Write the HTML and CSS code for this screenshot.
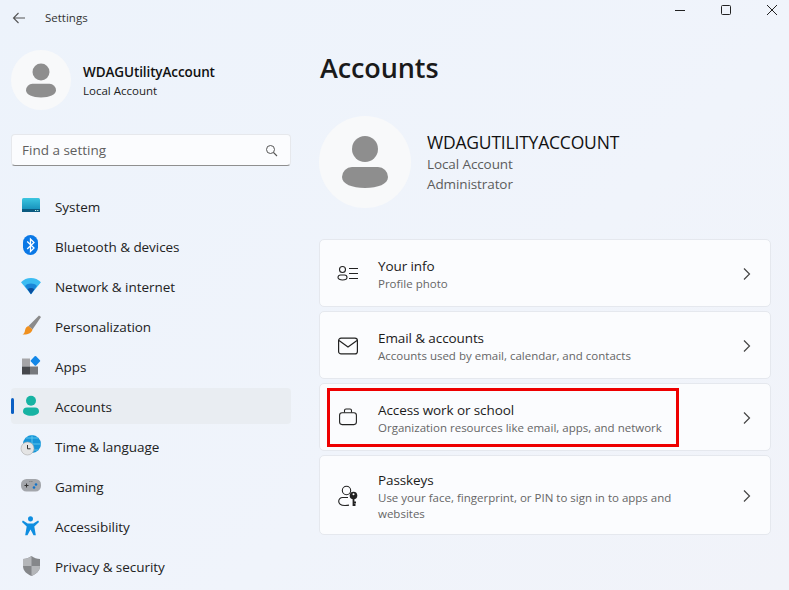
FILE: index.html
```html
<!DOCTYPE html>
<html lang="en">
<head>
  <meta charset="UTF-8" />
  <title>Settings</title>
  <link rel="stylesheet" href="styles.css">
</head>
<body>
  <div class="window">
    <header class="titlebar">
      <svg class="back" width="16" height="16" viewBox="0 0 16 16"><path d="M14 8H2.500M7.500 3 2.500 8l5 5" fill="none" stroke="#555" stroke-width="1.100"/></svg>
      <span class="app-name">Settings</span>
      <div class="controls">
        <svg width="12" height="12" viewBox="0 0 12 12"><path d="M1 6.500h10" stroke="#222" stroke-width="1"/></svg>
        <svg width="12" height="12" viewBox="0 0 12 12"><rect x="1.500" y="1.500" width="9" height="9" rx="1" fill="none" stroke="#222" stroke-width="1"/></svg>
        <svg width="12" height="12" viewBox="0 0 12 12"><path d="M1 1l10 10M11 1 1 11" stroke="#222" stroke-width="1"/></svg>
      </div>
    </header>

    <div class="columns">
      <aside class="sidebar">
        <div class="profile">
          <div class="avatar small">
            <svg width="30" height="35" viewBox="0 0 46 52"><circle cx="23" cy="13" r="13" fill="#8e8e8e"/><path d="M10 31h26a10 10 0 0 1 10 10c0 7-10 11-23 11S0 48 0 41a10 10 0 0 1 10-10z" fill="#8e8e8e"/></svg>
          </div>
          <div>
            <div class="profile-name">WDAGUtilityAccount</div>
            <div class="profile-type">Local Account</div>
          </div>
        </div>

        <div class="search">
          <span>Find a setting</span>
          <svg width="13" height="13" viewBox="0 0 13 13"><circle cx="5.500" cy="5.500" r="4" fill="none" stroke="#555" stroke-width="1"/><path d="M8.500 8.500 12 12" stroke="#555" stroke-width="1.100"/></svg>
        </div>

        <nav class="nav">
          <a class="nav-item">
            <svg class="nav-icon" viewBox="0 0 20 20"><defs><linearGradient id="sys" x1="0" y1="0" x2="0" y2="1"><stop offset="0" stop-color="#3cc6e0"/><stop offset="1" stop-color="#0f86b4"/></linearGradient></defs><rect x="0" y="2" width="18" height="14" rx="1.500" fill="url(#sys)"/><rect x="0" y="13" width="18" height="3" fill="#0b5a80"/><path d="M13 14.500h1.200M15.200 14.500h1.200" stroke="#cfe" stroke-width="1"/></svg>
            System
          </a>
          <a class="nav-item">
            <svg class="nav-icon" viewBox="0 0 20 20"><rect x="1" y="-1" width="15" height="20" rx="7.500" fill="#0a78e6"/><path d="M5.200 5.500 12 12 8.500 15.500V3L12 6.500 5.200 13" fill="none" stroke="#fff" stroke-width="1.300"/></svg>
            Bluetooth &amp; devices
          </a>
          <a class="nav-item">
            <svg class="nav-icon" viewBox="0 0 20 20"><g transform="translate(-1 -1.500) scale(1.050 1.200)"><path d="M0 6.500C2.500 4.300 5.800 3 9.500 3s7 1.300 9.500 3.500L9.500 16.500z" fill="#3bbcf2"/><path d="M3.800 9.500C5.300 8.200 7.300 7.500 9.500 7.500s4.200.7 5.700 2L9.500 16.500z" fill="#1a86d8"/><path d="M6.300 12.300c.9-.7 2-1.100 3.200-1.100s2.300.4 3.200 1.100l-3.200 4.200z" fill="#0b4f9e"/></g></svg>
            Network &amp; internet
          </a>
          <a class="nav-item">
            <svg class="nav-icon" viewBox="0 0 20 20"><path d="M6.500 10 17 -0.500l2 1.500L10.500 13.500z" fill="#8b8b8b"/><path d="M6.500 10 10.500 13.500c-.5 3.500-5 5.500-10 5 1.800-1 2.200-2.500 2.600-4.500.4-2 1.900-3.700 3.400-4z" fill="#f0901e"/></svg>
            Personalization
          </a>
          <a class="nav-item">
            <svg class="nav-icon" viewBox="0 0 20 20"><g transform="translate(-1 0)"><rect x="1" y="2.500" width="8" height="8" fill="#a5a5a8"/><rect x="1" y="10.500" width="8" height="8" fill="#46484c"/><rect x="9" y="10.500" width="8" height="8" fill="#77797d"/><rect x="10.700" y="1.200" width="7.400" height="7.400" rx="1" transform="rotate(45 14.400 4.900)" fill="#1287e8"/></g></svg>
            Apps
          </a>
          <a class="nav-item active">
            <svg class="nav-icon" viewBox="0 0 20 20"><circle cx="9" cy="4.800" r="5" fill="#17b3a3"/><path d="M5 11.500h8a4 4 0 0 1 4 4c0 2.600-3.600 4.200-8 4.200s-8-1.600-8-4.200a4 4 0 0 1 4-4z" fill="#17b3a3"/></svg>
            Accounts
          </a>
          <a class="nav-item">
            <svg class="nav-icon" viewBox="0 0 20 20"><circle cx="10" cy="8" r="9" fill="#1795d8"/><path d="M1 8h18M10-1v18M4 2h12M4 14h12" stroke="#6cd0f2" stroke-width=".8"/><circle cx="5.500" cy="12.500" r="6.500" fill="#e4e4e4" stroke="#aaa" stroke-width=".6"/><path d="M5.500 9V12.800H8.500" fill="none" stroke="#333" stroke-width="1"/></svg>
            Time &amp; language
          </a>
          <a class="nav-item">
            <svg class="nav-icon" viewBox="0 0 20 20"><g transform="translate(-1 0)"><rect x="0" y="3" width="20" height="12.500" rx="5.500" fill="#a3a6ab"/><path d="M3.500 9.500h4M5.500 7.500v4" stroke="#333" stroke-width="1"/><circle cx="13" cy="11.500" r="1.300" fill="#1273c8"/><circle cx="15" cy="8.500" r="1.300" fill="#1273c8"/><path d="M8.500 5.500h.8M10.500 5.500h.8" stroke="#555" stroke-width=".8"/></g></svg>
            Gaming
          </a>
          <a class="nav-item">
            <svg class="nav-icon" viewBox="0 0 20 20"><g transform="translate(-1 0) scale(.95 1)"><circle cx="10" cy="2.800" r="2.600" fill="#0f8ee0"/><path d="M2 4.500 7 7.500h6l5-3 1 1.600L14 10.500l1.600 8.800h-2.400L10 13.500l-3.200 5.800H4.400L6 10.500 1 6.100z" fill="#0f8ee0"/></g></svg>
            Accessibility
          </a>
          <a class="nav-item">
            <svg class="nav-icon" viewBox="0 0 20 20"><path d="M9.500 0C12 2 15 3 18 3v7c0 5-4 8-8.500 10C5 18 1 15 1 10V3c3 0 6-1 8.500-3z" fill="#85878a"/><path d="M9.500 0v10H1V3c3 0 6-1 8.500-3zM9.500 10H18c0 5-4 8-8.500 10z" fill="#b4b6b9"/></svg>
            Privacy &amp; security
          </a>
        </nav>
      </aside>

      <main class="content">
        <h1 class="page-title">Accounts</h1>

        <section class="account">
          <div class="avatar large">
            <svg width="46" height="52" viewBox="0 0 46 52"><circle cx="23" cy="13" r="13" fill="#8e8e8e"/><path d="M10 31h26a10 10 0 0 1 10 10c0 7-10 11-23 11S0 48 0 41a10 10 0 0 1 10-10z" fill="#8e8e8e"/></svg>
          </div>
          <div>
            <div class="account-name">WDAGUTILITYACCOUNT</div>
            <div class="account-line">Local Account</div>
            <div class="account-line">Administrator</div>
          </div>
        </section>

        <section class="cards">
          <div class="card">
            <svg class="card-icon" viewBox="0 0 20 20"><circle cx="4.500" cy="6.500" r="3" fill="none" stroke="#222" stroke-width="1.100"/><path d="M2.500 12h4A2.500 2.500 0 0 1 9 14.500C9 16 7 17 4.500 17S0 16 0 14.500A2.500 2.500 0 0 1 2.500 12z" fill="none" stroke="#222" stroke-width="1.100"/><path d="M11 5.500h9M11 10.500h9M11 15.500h9" stroke="#222" stroke-width="1.100"/></svg>
            <div class="card-text">
              <div class="card-title">Your info</div>
              <div class="card-desc">Profile photo</div>
            </div>
            <svg class="chevron" width="10" height="14" viewBox="0 0 10 14"><path d="M2 1.500 7.500 7 2 12.500" fill="none" stroke="#444" stroke-width="1.200"/></svg>
          </div>

          <div class="card">
            <svg class="card-icon" viewBox="0 0 20 20"><rect x=".6" y="3.100" width="18.800" height="15.800" rx="2.500" fill="none" stroke="#222" stroke-width="1.200"/><path d="M1 5.500 10 12l9-6.500" fill="none" stroke="#222" stroke-width="1.200"/></svg>
            <div class="card-text">
              <div class="card-title">Email &amp; accounts</div>
              <div class="card-desc">Accounts used by email, calendar, and contacts</div>
            </div>
            <svg class="chevron" width="10" height="14" viewBox="0 0 10 14"><path d="M2 1.500 7.500 7 2 12.500" fill="none" stroke="#444" stroke-width="1.200"/></svg>
          </div>

          <div class="card">
            <svg class="card-icon" viewBox="0 0 20 20"><rect x="1.600" y="5.800" width="16.800" height="11.800" rx="2.500" fill="none" stroke="#222" stroke-width="1.100"/><path d="M6.500 5.500V3.500A1.500 1.500 0 0 1 8 2h4a1.500 1.500 0 0 1 1.500 1.500v2" fill="none" stroke="#222" stroke-width="1.100"/></svg>
            <div class="card-text">
              <div class="card-title">Access work or school</div>
              <div class="card-desc">Organization resources like email, apps, and network</div>
            </div>
            <svg class="chevron" width="10" height="14" viewBox="0 0 10 14"><path d="M2 1.500 7.500 7 2 12.500" fill="none" stroke="#444" stroke-width="1.200"/></svg>
            <div class="highlight"></div>
          </div>

          <div class="card tall">
            <svg class="card-icon" viewBox="0 0 20 20"><circle cx="8.500" cy="5.500" r="4.200" fill="none" stroke="#222" stroke-width="1.100"/><path d="M10 12.500H4.500a3.800 3.800 0 0 0-3.800 3.800c0 2.700 2.500 4.200 6.300 4.200 1.300 0 2.700-.1 4-.4" fill="none" stroke="#222" stroke-width="1.100"/><circle cx="15.500" cy="10.500" r="3.800" fill="#222"/><circle cx="15.500" cy="9.200" r="1" fill="#fff"/><path d="M15.500 13v8M15.500 17.500h2.500M15.500 20h2" stroke="#222" stroke-width="1.800"/></svg>
            <div class="card-text">
              <div class="card-title">Passkeys</div>
              <div class="card-desc">Use your face, fingerprint, or PIN to sign in to apps and websites</div>
            </div>
            <svg class="chevron" width="10" height="14" viewBox="0 0 10 14"><path d="M2 1.500 7.500 7 2 12.500" fill="none" stroke="#444" stroke-width="1.200"/></svg>
          </div>
        </section>
      </main>
    </div>
  </div>
</body>
</html>
```

FILE: styles.css
```css
* {
  box-sizing: border-box;
}

html, body {
  margin: 0;
  height: 100%;
}

body {
  font-family: 'Open Sans', 'Noto Sans', sans-serif;
  color: #1b1b1b;
  background-color: #eff4fb;
}

.window {
  height: 590px;
  overflow: hidden;
  background: linear-gradient(135deg, #edf3fb 0%, #f0f4fb 60%, #f1f3f9 100%);
}

/* title bar */
.titlebar {
  display: flex;
  align-items: center;
  height: 36px;
  padding-left: 11px;
}

.back {
  margin-right: 18px;
}

.app-name {
  font-size: 11.500px;
  color: #333;
  margin-top: -2px;
}

.controls {
  display: flex;
  gap: 34px;
  margin-left: auto;
  margin-right: 11px;
  margin-top: -16px;
}

.columns {
  display: flex;
}

/* sidebar */
.sidebar {
  width: 319px;
  padding: 14px 28px 0 11px;
  flex-shrink: 0;
}

.profile {
  display: flex;
  align-items: center;
  gap: 12px;
  height: 60px;
}

.avatar {
  display: flex;
  align-items: center;
  justify-content: center;
  border-radius: 50%;
  background-color: #f8f9fa;
  flex-shrink: 0;
}

.avatar.small {
  width: 60px;
  height: 60px;
}

.avatar.large {
  width: 92px;
  height: 92px;
}

.profile-name {
  font-size: 13.500px;
  font-weight: 600;
  line-height: 19px;
  color: #111;
  letter-spacing: -0.1px;
  margin-top: 2px;
}

.profile-type {
  font-size: 11.500px;
  line-height: 17px;
  color: #222;
}

.search {
  display: flex;
  align-items: center;
  justify-content: space-between;
  width: 280px;
  height: 32px;
  margin: 24px 0 22px;
  padding: 0 12px 0 10px;
  font-size: 13.500px;
  color: #5f5f5f;
  background-color: #fbfcfe;
  border: 1px solid #e6e8ec;
  border-bottom-color: #8f8f8f;
  border-radius: 4px;
}

.nav {
  display: flex;
  flex-direction: column;
  gap: 4px;
}

.nav-item {
  position: relative;
  display: flex;
  align-items: center;
  gap: 13px;
  height: 36px;
  padding: 2px 0 0 11px;
  font-size: 13.500px;
  color: #222;
  border-radius: 4px;
  letter-spacing: -0.05px;
}

.nav-item.active {
  background-color: #e9edf2;
}

.nav-item.active::before {
  content: "";
  position: absolute;
  left: 0;
  top: 10px;
  width: 3px;
  height: 16px;
  border-radius: 2px;
  background-color: #0a5fc4;
}

.nav-icon {
  width: 20px;
  height: 20px;
  margin-top: -2px;
  flex-shrink: 0;
  overflow: visible;
}

/* main column */
.content {
  flex: 1;
  padding: 10px 18px 0 0;
}

.page-title {
  margin: 0 0 26px 1px;
  font-size: 27px;
  font-weight: 600;
  line-height: 44px;
  color: #1a1a1a;
  letter-spacing: -0.1px;
}

.account {
  display: flex;
  align-items: center;
  gap: 16px;
  margin-bottom: 31px;
}

.account-name {
  font-size: 17.500px;
  line-height: 23px;
  color: #111;
  letter-spacing: -0.2px;
}

.account-line {
  font-size: 13.500px;
  line-height: 20px;
  color: #5c5c5c;
  letter-spacing: -0.1px;
}

.cards {
  display: flex;
  flex-direction: column;
  gap: 4px;
}

.card {
  position: relative;
  display: flex;
  align-items: center;
  height: 68px;
  padding: 0 18px 0 18px;
  background-color: #fbfcfe;
  border: 1px solid #e5e8ee;
  border-radius: 5px;
}

.card.tall {
  height: 80px;
}

.card-icon {
  width: 20px;
  height: 20px;
  margin-right: 20px;
  flex-shrink: 0;
  overflow: visible;
}

.card-text {
  flex: 1;
  max-width: 320px;
  padding-top: 3px;
}

.card-title {
  font-size: 13.500px;
  line-height: 18px;
  color: #1b1b1b;
  letter-spacing: -0.1px;
  margin-bottom: 1px;
}

.card-desc {
  font-size: 11.500px;
  line-height: 16px;
  color: #666;
}

.chevron {
  margin: 2px 0 0 auto;
}

.highlight {
  position: absolute;
  left: 7px;
  top: 4px;
  width: 352px;
  height: 59px;
  border: 3px solid #ee0000;
}
```
